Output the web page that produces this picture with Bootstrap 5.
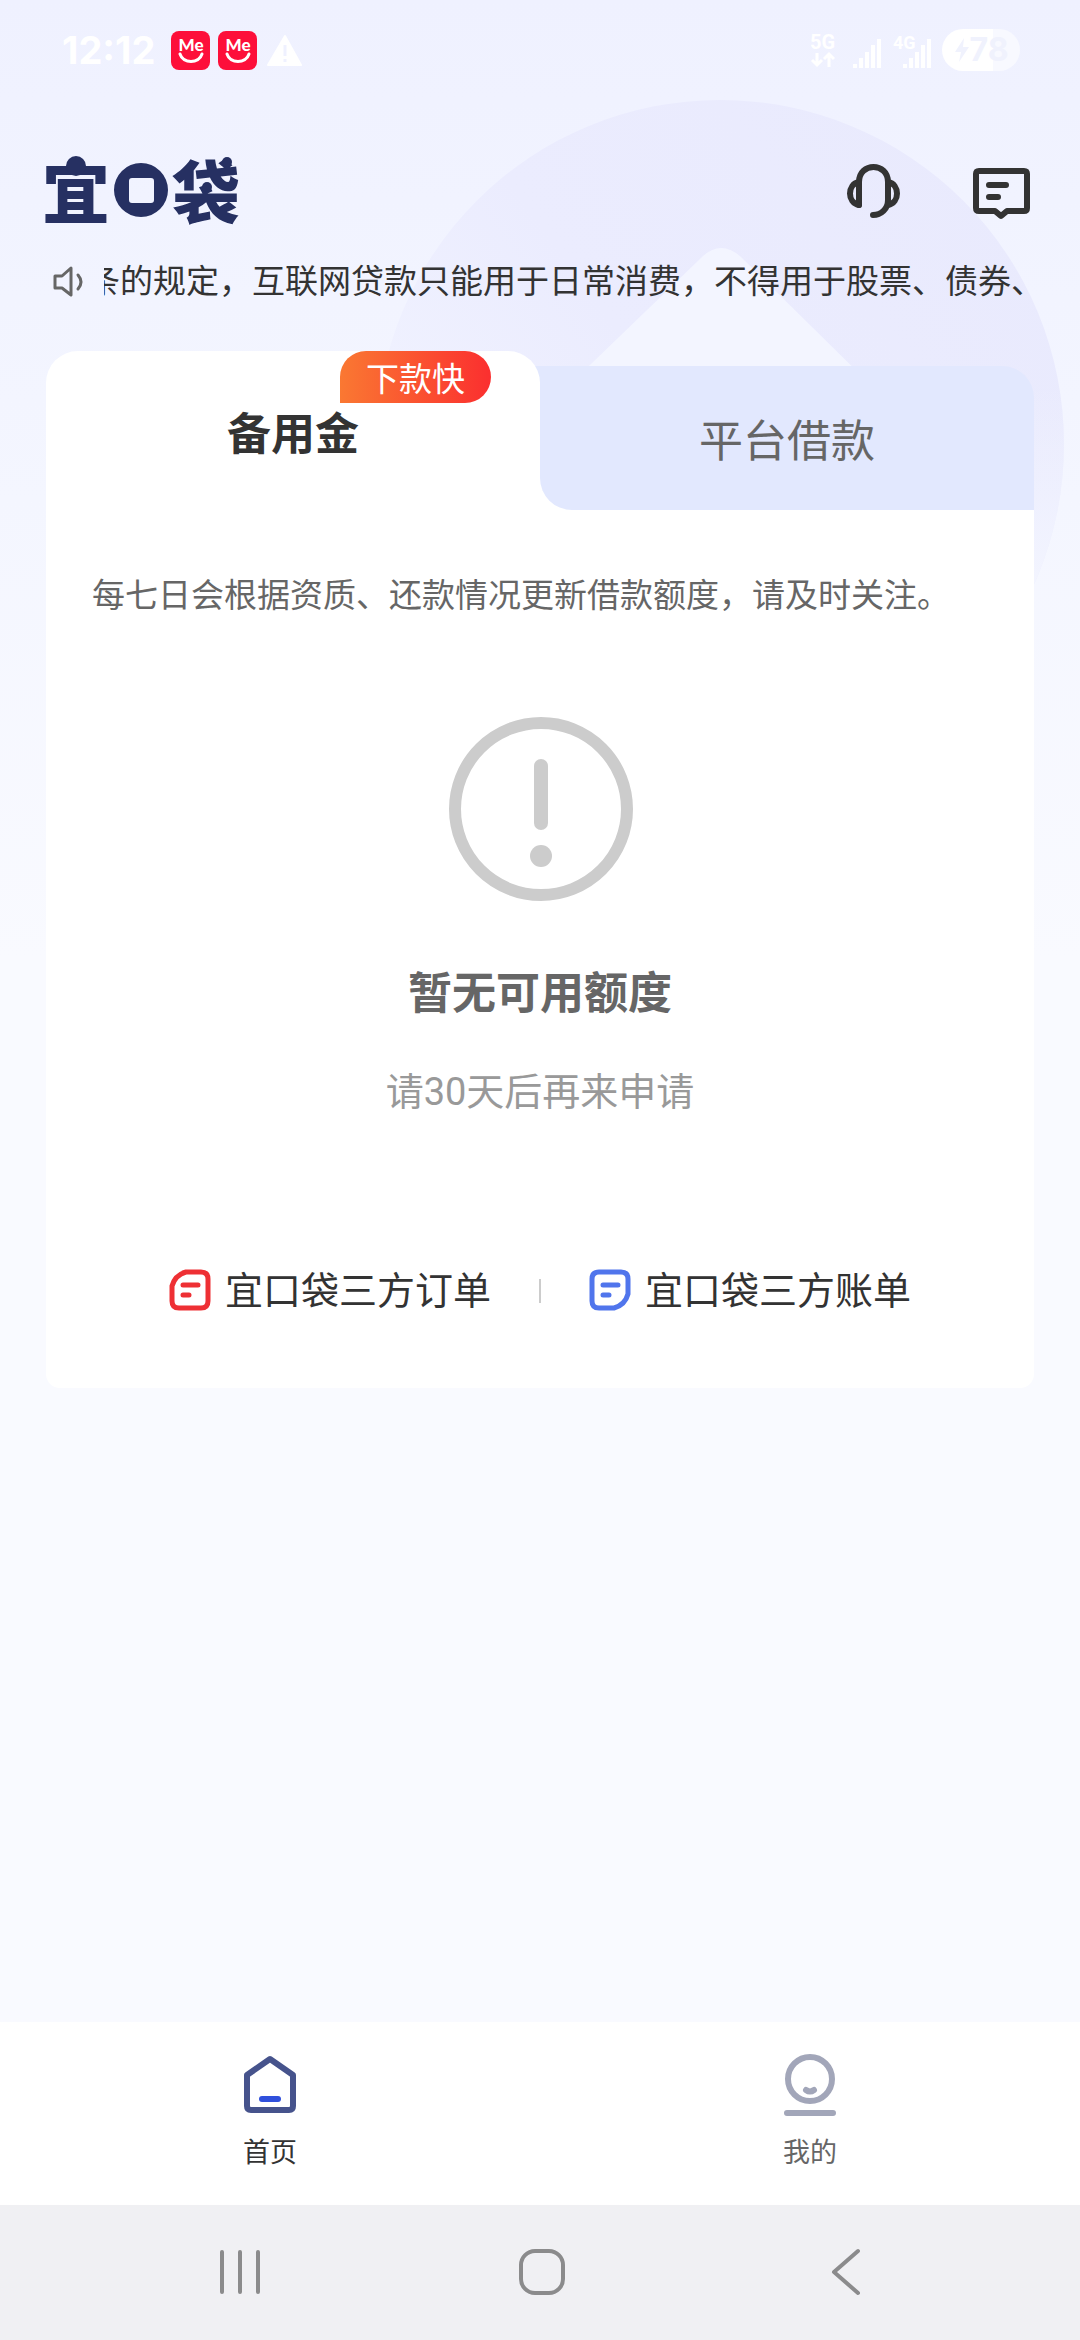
<!DOCTYPE html>
<html lang="zh-CN">
<head>
<meta charset="utf-8">
<meta name="viewport" content="width=device-width, initial-scale=1">
<title>宜口袋</title>
<link href="https://cdn.jsdelivr.net/npm/bootstrap@5.3.0/dist/css/bootstrap.min.css" rel="stylesheet">
<style>
  body { font-family: Roboto, "Noto Sans CJK SC", sans-serif; color: #333; background: linear-gradient(#eff1ff 0, #f4f6ff 500px, #f9faff 960px) #f9faff no-repeat; }
  svg { display: block; flex: none; overflow: visible; }
  a, a:hover { color: inherit; text-decoration: none; }
  .deco { top: 100px; right: 16px; z-index: 0; }
  .layer { z-index: 1; }
  .status-bar { height: 100px; padding: 0 60px 0 62px; color: #fff; }
  .clock { font: 700 38px/40px Inter, Roboto, sans-serif; }
  .battery { width: 78px; height: 42px; background: linear-gradient(90deg, #fff 66%, #f8f9ff 66%); font: 700 32px/42px Inter, Roboto, sans-serif; color: #f0f2fd; }
  .page-gutter { padding-left: 46px; padding-right: 46px; }
  .app-head { height: 130px; padding-top: 56px; }
  .head-tools { gap: 68px; padding-top: 6px; }
  .ticker { height: 52px; margin-top: 27px; font-size: 33px; line-height: 50px; }
  .ticker-view { margin-left: 18px; height: 52px; }
  .ticker-view span { margin-left: -17px; }
  .panel { margin-top: 42px; }
  .tab-on, .tab-off { border: 0; font-size: 44px; line-height: 60px; padding: 8px 0 0; }
  .tab-on { background: #fff; color: #333; font-weight: 700; border-radius: 32px 32px 0 0; z-index: 1; }
  .tab-off { background: #e2e8fe; color: #666; height: 144px; border-radius: 0 32px 0 32px; }
  .tab-off::before { content: ""; position: absolute; left: -32px; top: 0; width: 32px; height: 32px; background: #e2e8fe; }
  .tab-wrap { margin-top: 15px; background: linear-gradient(#fff, #fff) 0 100% / 40px 40px no-repeat; }
  .hot-tag { top: 0; right: 49px; width: 151px; height: 52px; border-radius: 26px 26px 26px 0; background: linear-gradient(90deg, #fa7832, #fb2f2f); color: #fff; font-size: 33px; line-height: 58px; font-weight: 400; }
  .panel-body { background: #fff; border-radius: 0 0 14px 14px; padding: 61px 46px 66px; }
  .tip { font-size: 33px; line-height: 50px; color: #666; }
  .empty-icon { margin: 95px auto 0; }
  .empty-title { font-size: 44px; line-height: 60px; color: #666; margin-top: 62px; }
  .empty-sub { font-size: 38px; line-height: 60px; color: #999; margin-top: 38px; }
  .bill-links { margin-top: 138px; font-size: 38px; line-height: 62px; gap: 48px; }
  .bill-links a { gap: 14px; }
  .bar { width: 2px; height: 24px; background: #ccc; }
  .tab-bar { height: 183px; padding-top: 31px; background: #fff; font-size: 27px; line-height: 40px; }
  .tab-bar a { gap: 16px; }
  .tab-me { color: #666; }
  .sys-bar { height: 135px; background: #f0f0f3; padding: 0 210px; }
</style>
</head>
<body class="position-relative d-flex flex-column min-vh-100">

<svg class="deco position-absolute" width="688" height="520" viewBox="0 0 688 520" aria-hidden="true">
  <defs>
    <linearGradient id="disc" x1="1" y1="0.2" x2="0" y2="0.75">
      <stop offset="0" stop-color="#e9eafd"/><stop offset="0.6" stop-color="#ebecfe"/><stop offset="1" stop-color="#f1f3ff"/>
    </linearGradient>
    <linearGradient id="fade" x1="0" y1="0" x2="0" y2="1">
      <stop offset="0.55" stop-color="#f4f6ff" stop-opacity="0"/><stop offset="1" stop-color="#f4f6ff"/>
    </linearGradient>
    <clipPath id="disc-clip"><circle cx="344" cy="344" r="344"/></clipPath>
  </defs>
  <g clip-path="url(#disc-clip)">
    <rect width="688" height="520" fill="url(#disc)"/>
    <path d="M188 290 325 158Q345 138 366 158L500 290Z" fill="#f3f5ff"/>
    <rect width="688" height="520" fill="url(#fade)"/>
  </g>
</svg>

<div class="status-bar layer d-flex align-items-center justify-content-between">
  <div class="d-flex align-items-center">
    <span class="clock">12:12</span>
    <svg class="ms-3" width="132" height="38" viewBox="0 0 132 38">
      <g id="me">
        <rect width="39" height="39" rx="8" fill="#fd0f3a"/>
        <text x="20" y="20" text-anchor="middle" font-family="Lato, sans-serif" font-weight="900" font-size="17" fill="#fff">Me</text>
        <path d="M9 23c3 10 19 10 22 0" fill="none" stroke="#fff" stroke-width="3" stroke-linecap="round"/>
      </g>
      <use href="#me" x="47"/>
      <path d="M114 5 130 34H97Z" fill="#fff" stroke="#fff" stroke-width="2" stroke-linejoin="round"/>
      <path d="M114 14v11M114 28v3" stroke="#eff1ff" stroke-width="3"/>
    </svg>
  </div>
  <div class="d-flex align-items-center">
    <svg width="125" height="38" viewBox="0 0 125 38" fill="#fff">
      <text x="1" y="18" font-family="Roboto, sans-serif" font-weight="700" font-size="20">5G</text>
      <path d="M8 22v12M3 29l5 5 5-5M20 36V23M15 28l5-5 5 5" fill="none" stroke="#fff" stroke-width="3"/>
      <path d="M44 33h4v4h-4zM50 27h4v10h-4zM56 21h4v16h-4zM62 14h4v23h-4zM68 8h4v29h-4z"/>
      <path d="M94 33h4v4h-4zM100 27h4v10h-4zM106 21h4v16h-4zM112 14h4v23h-4zM118 8h4v29h-4z"/>
      <text x="84" y="18" font-family="Roboto, sans-serif" font-weight="700" font-size="18">4G</text>
    </svg>
    <div class="battery ms-2 rounded-pill d-flex align-items-center justify-content-center">
      <svg width="16" height="26" viewBox="0 0 16 26"><path d="M10 1 1 15h6l-2 10L15 10H9Z" fill="#f0f2fd"/></svg>
      <span>78</span>
    </div>
  </div>
</div>

<header class="app-head page-gutter layer d-flex justify-content-between align-items-start">
  <svg width="190" height="72" viewBox="0 0 190 72" fill="#263062" role="img" aria-label="宜口袋">
    <text x="-4" y="62" font-family="'Noto Sans CJK SC', sans-serif" font-weight="900" font-size="68">宜</text>
    <circle cx="30" cy="10" r="10"/>
    <path fill-rule="evenodd" d="M95 7a27 27 0 1 1 0 54 27 27 0 0 1 0-54ZM86 22a3 3 0 0 0-3 3v19a3 3 0 0 0 3 3h19a3 3 0 0 0 3-3V25a3 3 0 0 0-3-3Z"/>
    <text x="126" y="62" font-family="'Noto Sans CJK SC', sans-serif" font-weight="900" font-size="68">袋</text>
    <circle cx="181" cy="6" r="5"/>
    <circle cx="161" cy="31" r="5"/>
  </svg>
  <div class="head-tools d-flex">
    <a href="#service" aria-label="客服">
      <svg width="56" height="58" viewBox="0 0 56 58" fill="none" stroke="#333" stroke-width="6" stroke-linecap="round" stroke-linejoin="round">
        <path d="M13 43V20C13 0 42 0 42 20V38C42 47 35 53 27 53"/>
        <path d="M13 20C1 22 1 41 13 43M42 20C54 22 54 41 42 43"/>
      </svg>
    </a>
    <a href="#message" aria-label="消息">
      <svg width="64" height="58" viewBox="0 0 64 58" fill="none" stroke="#333" stroke-width="6" stroke-linecap="round" stroke-linejoin="round">
        <path d="M9 9H54Q57 9 57 12V46Q57 49 54 49H37L31 54 25 49H9Q6 49 6 46V12Q6 9 9 9ZM19 23H36M19 35H28"/>
      </svg>
    </a>
  </div>
</header>

<div class="ticker page-gutter layer d-flex align-items-center">
  <svg class="ms-1" width="36" height="38" viewBox="0 0 36 38" fill="none" stroke="#666" stroke-width="3" stroke-linejoin="round" stroke-linecap="round">
    <path d="M5 12v12h7l9 7V4l-9 8ZM28 11q6 7 0 14"/>
  </svg>
  <div class="ticker-view flex-grow-1 overflow-hidden text-nowrap"><span>条的规定，互联网贷款只能用于日常消费，不得用于股票、债券、</span></div>
</div>

<main class="page-gutter layer flex-grow-1">
  <section class="panel">
    <div class="d-flex align-items-stretch" role="tablist">
      <button class="tab-on w-50 position-relative" type="button" role="tab" aria-selected="true">
        备用金<span class="hot-tag position-absolute text-center">下款快</span>
      </button>
      <div class="tab-wrap w-50">
        <button class="tab-off w-100 d-block position-relative" type="button" role="tab" aria-selected="false">平台借款</button>
      </div>
    </div>
    <div class="panel-body">
      <p class="tip mb-0">每七日会根据资质、还款情况更新借款额度，请及时关注。</p>
      <div class="text-center">
        <svg class="empty-icon" width="186" height="186" viewBox="0 0 186 186" fill="none" stroke="#ccc">
          <circle cx="94" cy="93" r="86" stroke-width="12"/>
          <path d="M94 50V107" stroke-width="14" stroke-linecap="round"/>
          <circle cx="94" cy="140" r="11" fill="#ccc" stroke="none"/>
        </svg>
        <h1 class="empty-title fw-bold mb-0">暂无可用额度</h1>
        <p class="empty-sub mb-0">请30天后再来申请</p>
      </div>
      <div class="bill-links d-flex justify-content-center align-items-center">
        <a href="#orders" class="d-flex align-items-center">
          <svg width="42" height="44" viewBox="0 0 42 44" fill="none" stroke="#ee3034" stroke-width="4" stroke-linecap="round" stroke-linejoin="round">
            <path d="M17 3H32Q39 3 39 10V32Q39 39 32 39H10Q3 39 3 32V17Q6 6 17 3ZM14 16H29M14 26H20" stroke-width="5"/>
          </svg>宜口袋三方订单</a>
        <span class="bar"></span>
        <a href="#bills" class="d-flex align-items-center">
          <svg width="42" height="44" viewBox="0 0 42 44" fill="none" stroke="#5075ec" stroke-width="4" stroke-linecap="round" stroke-linejoin="round">
            <path d="M10 3H32Q39 3 39 10V25Q36 36 25 39H10Q3 39 3 32V10Q3 3 10 3ZM14 16H29M14 26H20" stroke-width="5"/>
          </svg>宜口袋三方账单</a>
      </div>
    </div>
  </section>
</main>

<nav class="tab-bar layer d-flex text-center">
  <a href="#home" class="w-50 d-flex flex-column align-items-center">
    <svg width="60" height="64" viewBox="0 0 60 64" fill="none" stroke-linecap="round" stroke-linejoin="round">
      <path d="M30 6 53 22V53Q53 57 49 57H11Q7 57 7 53V22Z" stroke="#46538c" stroke-width="6"/>
      <path d="M22 46H38" stroke="#3050dc" stroke-width="6"/>
    </svg>首页</a>
  <a href="#me-page" class="tab-me w-50 d-flex flex-column align-items-center">
    <svg width="60" height="64" viewBox="0 0 60 64" fill="none" stroke="#a2a6b9" stroke-width="6" stroke-linecap="round">
      <circle cx="30" cy="26" r="22"/>
      <path d="M26 37q4 3 8 0M7 60H53"/>
    </svg>我的</a>
</nav>

<div class="sys-bar layer d-flex justify-content-between align-items-center">
  <button type="button" class="btn p-0 border-0" aria-label="最近任务"><svg width="60" height="48" viewBox="0 0 60 48" stroke="#8b8b8c" stroke-width="4" stroke-linecap="round"><path d="M12 3V43M30 3V43M48 3V43"/></svg></button>
  <button type="button" class="btn p-0 border-0" aria-label="主屏幕"><svg width="48" height="48" viewBox="0 0 48 48" fill="none" stroke="#8b8b8c" stroke-width="4"><rect x="5" y="2" width="42" height="42" rx="14"/></svg></button>
  <button type="button" class="btn p-0 border-0" aria-label="返回"><svg width="60" height="48" viewBox="0 0 60 48" fill="none" stroke="#8b8b8c" stroke-width="4" stroke-linecap="round" stroke-linejoin="round"><path d="M48 2 24 23 48 44"/></svg></button>
</div>

<script src="https://cdn.jsdelivr.net/npm/bootstrap@5.3.0/dist/js/bootstrap.bundle.min.js"></script>
</body>
</html>
